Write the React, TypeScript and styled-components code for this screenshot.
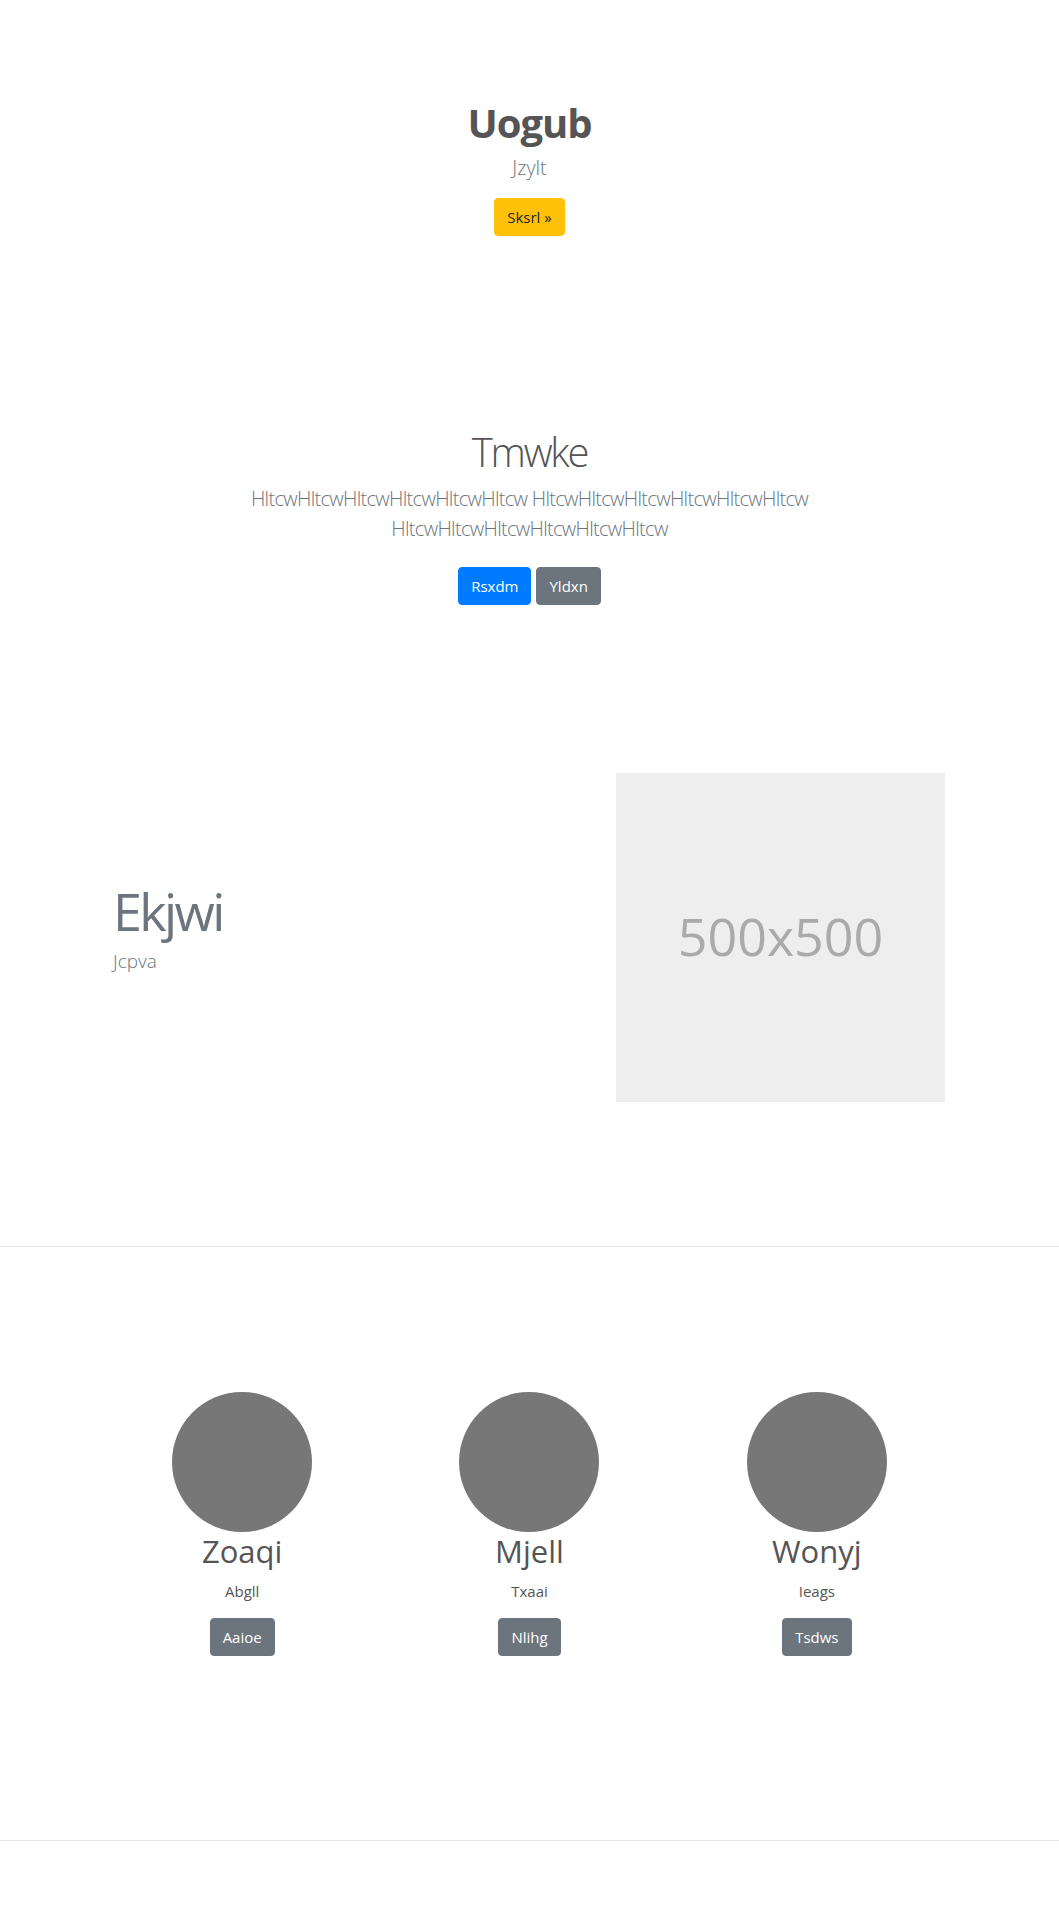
import React from "react";
import styled, { createGlobalStyle } from "styled-components";

const GlobalStyle = createGlobalStyle`
  html, body { margin: 0; padding: 0; background: #fff; }
  body {
    font-family: "Open Sans", "Noto Sans", "Liberation Sans", sans-serif;
    color: #555;
    -webkit-font-smoothing: antialiased;
  }
  * { box-sizing: border-box; }
`;

const Page = styled.main`
  width: 100%;
  min-height: 1920px;
  display: flex;
  flex-direction: column;
`;

const Hero = styled.section`
  padding-top: 99px;
  display: flex;
  flex-direction: column;
  align-items: center;
  text-align: center;
`;

const HeroTitle = styled.h1`
  margin: 0 0 6px;
  font-size: 40px;
  line-height: 48px;
  font-weight: 700;
  letter-spacing: -1px;
  color: #555;
`;

const Lead = styled.p<{ $mb?: number }>`
  margin: 0 0 ${(p) => p.$mb ?? 15}px;
  font-size: 20px;
  line-height: 30px;
  font-weight: 300;
  color: #6c757d;
`;

const Btn = styled.button<{ $variant: "warning" | "primary" | "secondary" }>`
  display: inline-block;
  height: 38px;
  padding: 6px 12px;
  border: 1px solid transparent;
  border-radius: 4px;
  font-family: inherit;
  font-size: 15px;
  line-height: 24px;
  font-weight: 400;
  cursor: pointer;
  background: ${(p) =>
    p.$variant === "warning" ? "#ffc107" : p.$variant === "primary" ? "#007bff" : "#6c757d"};
  border-color: ${(p) =>
    p.$variant === "warning" ? "#ffc107" : p.$variant === "primary" ? "#007bff" : "#6c757d"};
  color: ${(p) => (p.$variant === "warning" ? "#212529" : "#fff")};
`;

const Feature = styled.section`
  padding-top: 192px;
  display: flex;
  flex-direction: column;
  align-items: center;
  text-align: center;
`;

const FeatureTitle = styled.h2`
  margin: 0 0 8px;
  font-size: 40px;
  line-height: 48px;
  font-weight: 300;
  letter-spacing: -2.2px;
  color: #555;
`;

const FeatureText = styled.p`
  margin: 0 0 23px;
  max-width: 620px;
  font-size: 20px;
  line-height: 30px;
  font-weight: 300;
  color: #6c757d;
  letter-spacing: -0.7px;
`;

const BtnRow = styled.div`
  display: flex;
  gap: 5px;
  justify-content: center;
`;

const Split = styled.section`
  margin-top: 168px;
  padding: 0 114px 0 113px;
  display: grid;
  grid-template-columns: 1fr 1fr;
  align-items: center;
`;

const SplitText = styled.div`
  padding-bottom: 19px;
`;

const SplitTitle = styled.h2`
  margin: 0;
  font-size: 52px;
  line-height: 62px;
  font-weight: 400;
  letter-spacing: -2.6px;
  color: #6c757d;
`;

const SplitSub = styled.p`
  margin: 4px 0 0;
  font-size: 19px;
  line-height: 30px;
  font-weight: 300;
  color: #6c757d;
`;

const Placeholder = styled.div`
  justify-self: end;
  width: 329px;
  height: 329px;
  padding-bottom: 5px;
  background: #eee;
  display: flex;
  align-items: center;
  justify-content: center;
  color: #aaa;
  font-size: 52px;
  font-weight: 400;
`;

const Rule = styled.hr<{ $mt: number }>`
  margin: ${(p) => p.$mt}px 0 0;
  border: 0;
  border-top: 1px solid rgba(0, 0, 0, 0.1);
  height: 0;
  width: 100%;
`;

const Team = styled.section`
  margin: 145px auto 0;
  width: 862px;
  display: grid;
  grid-template-columns: repeat(3, 1fr);
`;

const Member = styled.div`
  display: flex;
  flex-direction: column;
  align-items: center;
  text-align: center;
`;

const Avatar = styled.div`
  width: 140px;
  height: 140px;
  border-radius: 50%;
  background: #777;
`;

const MemberName = styled.h3`
  margin: 0 0 10px;
  font-size: 31px;
  line-height: 38px;
  font-weight: 400;
  color: #555;
`;

const MemberRole = styled.p`
  margin: 0 0 16px;
  font-size: 15px;
  line-height: 22px;
  font-weight: 400;
  color: #555;
`;

const members = [
  { name: "Zoaqi", role: "Abgll", action: "Aaioe" },
  { name: "Mjell", role: "Txaai", action: "Nlihg" },
  { name: "Wonyj", role: "Ieags", action: "Tsdws" },
];

export default function App() {
  return (
    <>
      <GlobalStyle />
      <Page>
        <Hero>
          <HeroTitle>Uogub</HeroTitle>
          <Lead>Jzylt</Lead>
          <Btn $variant="warning">Sksrl »</Btn>
        </Hero>

        <Feature>
          <FeatureTitle>Tmwke</FeatureTitle>
          <FeatureText>
            HltcwHltcwHltcwHltcwHltcwHltcw HltcwHltcwHltcwHltcwHltcwHltcw HltcwHltcwHltcwHltcwHltcwHltcw
          </FeatureText>
          <BtnRow>
            <Btn $variant="primary">Rsxdm</Btn>
            <Btn $variant="secondary">Yldxn</Btn>
          </BtnRow>
        </Feature>

        <Split>
          <SplitText>
            <SplitTitle>Ekjwi</SplitTitle>
            <SplitSub>Jcpva</SplitSub>
          </SplitText>
          <Placeholder>500x500</Placeholder>
        </Split>

        <Rule $mt={144} />

        <Team>
          {members.map((m) => (
            <Member key={m.name}>
              <Avatar />
              <MemberName>{m.name}</MemberName>
              <MemberRole>{m.role}</MemberRole>
              <Btn $variant="secondary">{m.action}</Btn>
            </Member>
          ))}
        </Team>

        <Rule $mt={184} />
      </Page>
    </>
  );
}
